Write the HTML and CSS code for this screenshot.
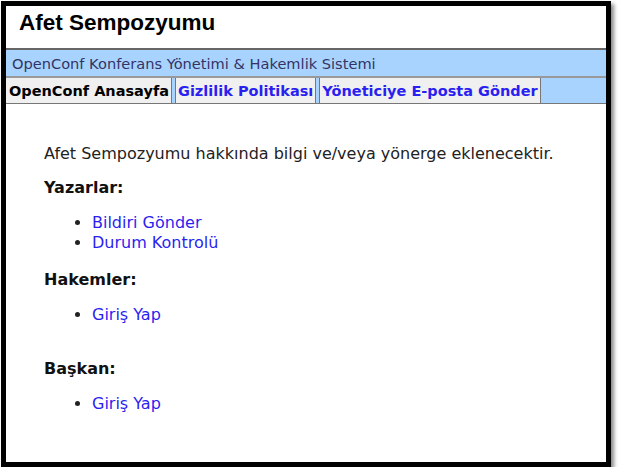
FILE: index.html
```html
<!DOCTYPE html>
<html>
<head>
  <meta charset="UTF-8">
  <title>Afet Sempozyumu</title>
  <link rel="stylesheet" href="styles.css">
</head>
<body>

<div class="frame">
  <div class="header">
    <h1>Afet Sempozyumu</h1>
  </div>
  <div class="subtitle">OpenConf Konferans Yönetimi &amp; Hakemlik Sistemi</div>
  <div class="nav">
    <span class="tab current">OpenConf Anasayfa</span>
    <a class="tab" href="#">Gizlilik Politikası</a>
    <a class="tab" href="#">Yöneticiye E-posta Gönder</a>
    <span class="filler"></span>
  </div>

  <div class="main">
    <p class="intro">Afet Sempozyumu hakkında bilgi ve/veya yönerge eklenecektir.</p>

    <h3>Yazarlar:</h3>
    <ul>
      <li><a href="#">Bildiri Gönder</a></li>
      <li><a href="#">Durum Kontrolü</a></li>
    </ul>

    <h3>Hakemler:</h3>
    <ul class="spaced">
      <li><a href="#">Giriş Yap</a></li>
    </ul>

    <h3>Başkan:</h3>
    <ul>
      <li><a href="#">Giriş Yap</a></li>
    </ul>
  </div>
</div>

</body>
</html>
```

FILE: styles.css
```css
body {
  margin: 0;
  background-color: #ffffff;
  font-family: "DejaVu Sans", Verdana, sans-serif;
}

.frame {
  margin: 1px 0 0 1px;
  width: 600px;
  height: 456px;
  border: 5px solid #000;
  background-color: #fff;
  box-shadow: 3px 3px 4px #8a8a8a;
  overflow: hidden;
}

.header {
  height: 42px;
  padding-left: 13px;
  border-bottom: 2px solid #666;
}

.header h1 {
  margin: 0;
  padding-top: 4px;
  font-family: "Liberation Sans", Arial, sans-serif;
  font-size: 22.5px;
  font-weight: bold;
  color: #000;
}

.subtitle {
  height: 26px;
  line-height: 27px;
  padding-left: 6px;
  background-color: #a8d3ff;
  color: #333366;
  font-size: 14.6px;
  border-bottom: 2px solid #999;
  white-space: nowrap;
}

.nav {
  display: flex;
  height: 25px;
  background-color: #a8d3ff;
  border-bottom: 1px solid #777;
}

.tab {
  display: block;
  padding: 0 2px;
  margin-left: 3px;
  line-height: 26px;
  font-size: 14.5px;
  font-weight: bold;
  color: #2a1ff0;
  text-decoration: none;
  white-space: nowrap;
  background-color: #f0f0f0;
  border-right: 1px solid #777;
  border-left: 1px solid #777;
}

.tab.current {
  margin-left: 0;
  padding-left: 3px;
  border-left: none;
  color: #000;
}

.filler {
  flex: 1;
}

.main {
  padding: 40px 0 0 38px;
  color: #222;
  font-size: 16px;
  line-height: 20px;
}

.intro {
  margin: 0 0 14px 0;
}

.main h3 {
  margin: 0 0 15px 0;
  font-size: 16px;
  font-weight: bold;
  color: #111;
}

.main ul {
  margin: 0 0 17px 0;
  padding-left: 48px;
}

.main ul.spaced {
  margin-bottom: 34px;
}

.main a {
  color: #2a1ff0;
  text-decoration: none;
}
```
